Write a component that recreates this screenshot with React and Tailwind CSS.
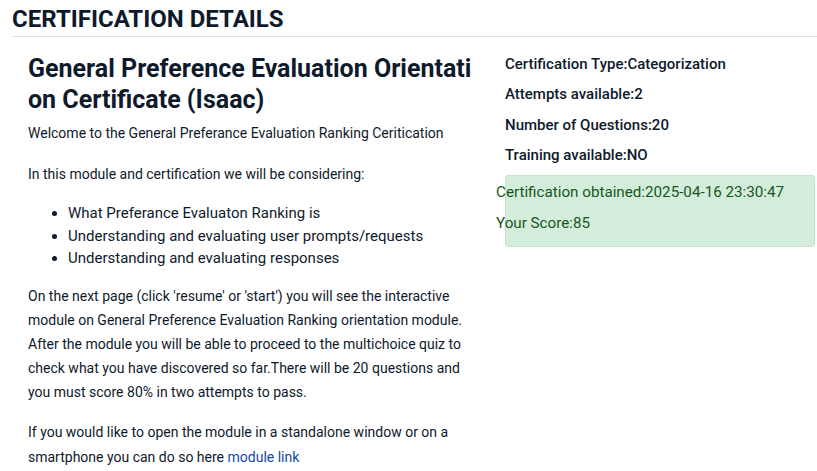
export default function App() {
  return (
    <div className="min-h-screen bg-white text-[#0e1a2b]" style={{ fontFamily: 'Roboto, "Liberation Sans", sans-serif' }}>
      <div className="pl-3">
        <h1 className="pt-[6px] pb-[4px] text-[24px] font-bold leading-[26px] uppercase">Certification Details</h1>
        <div className="border-b border-[#dee2e6]" />
        <div className="flex pt-4">
          <div className="w-[477px] shrink-0 pl-4 pr-[6px]">
            <h2 className="text-[25px] font-bold leading-[31px] break-all mb-[8px] mr-[4px]">
              General Preference Evaluation Orientation Certificate (Isaac)
            </h2>
            <p className="text-[14px] leading-[20px] mb-[21px]">Welcome to the General Preferance Evaluation Ranking Ceritication</p>
            <p className="text-[14px] leading-[20px] mb-[18px]">In this module and certification we will be considering:</p>
            <ul className="list-disc pl-10 text-[15px] leading-[22.5px] mb-[14px]">
              <li>What Preferance Evaluaton Ranking is</li>
              <li>Understanding and evaluating user prompts/requests</li>
              <li>Understanding and evaluating responses</li>
            </ul>
            <p className="text-[14px] leading-[24px] mb-[16px]">
              On the next page (click 'resume' or 'start') you will see the interactive module on General Preference Evaluation Ranking orientation module. After the module you will be able to proceed to the multichoice quiz to check what you have discovered so far.There will be 20 questions and you must score 80% in two attempts to pass.
            </p>
            <p className="text-[14px] leading-[25px]">
              If you would like to open the module in a standalone window or on a smartphone you can do so here{' '}
              <a href="#" className="text-[#1149a6]">module link</a>
            </p>
          </div>
          <div className="flex-1 pl-4 pr-[2px] pt-[0.5px] text-[15px] font-medium leading-[20px]">
            <p className="mb-[10.5px]">Certification Type:Categorization</p>
            <p className="mb-[10.5px]">Attempts available:2</p>
            <p className="mb-[10.5px]">Number of Questions:20</p>
            <p className="mb-[10px]">Training available:NO</p>
            <div className="rounded-[3px] border border-[#c3e6cb] bg-[#d4edda] text-[#155724] font-normal pb-[13px]">
              <p className="-ml-[10px] pt-[6px] mb-[11px] text-[15.2px]">Certification obtained:2025-04-16 23:30:47</p>
              <p className="-ml-[10px] text-[15.2px]">Your Score:85</p>
            </div>
          </div>
        </div>
      </div>
    </div>
  )
}
